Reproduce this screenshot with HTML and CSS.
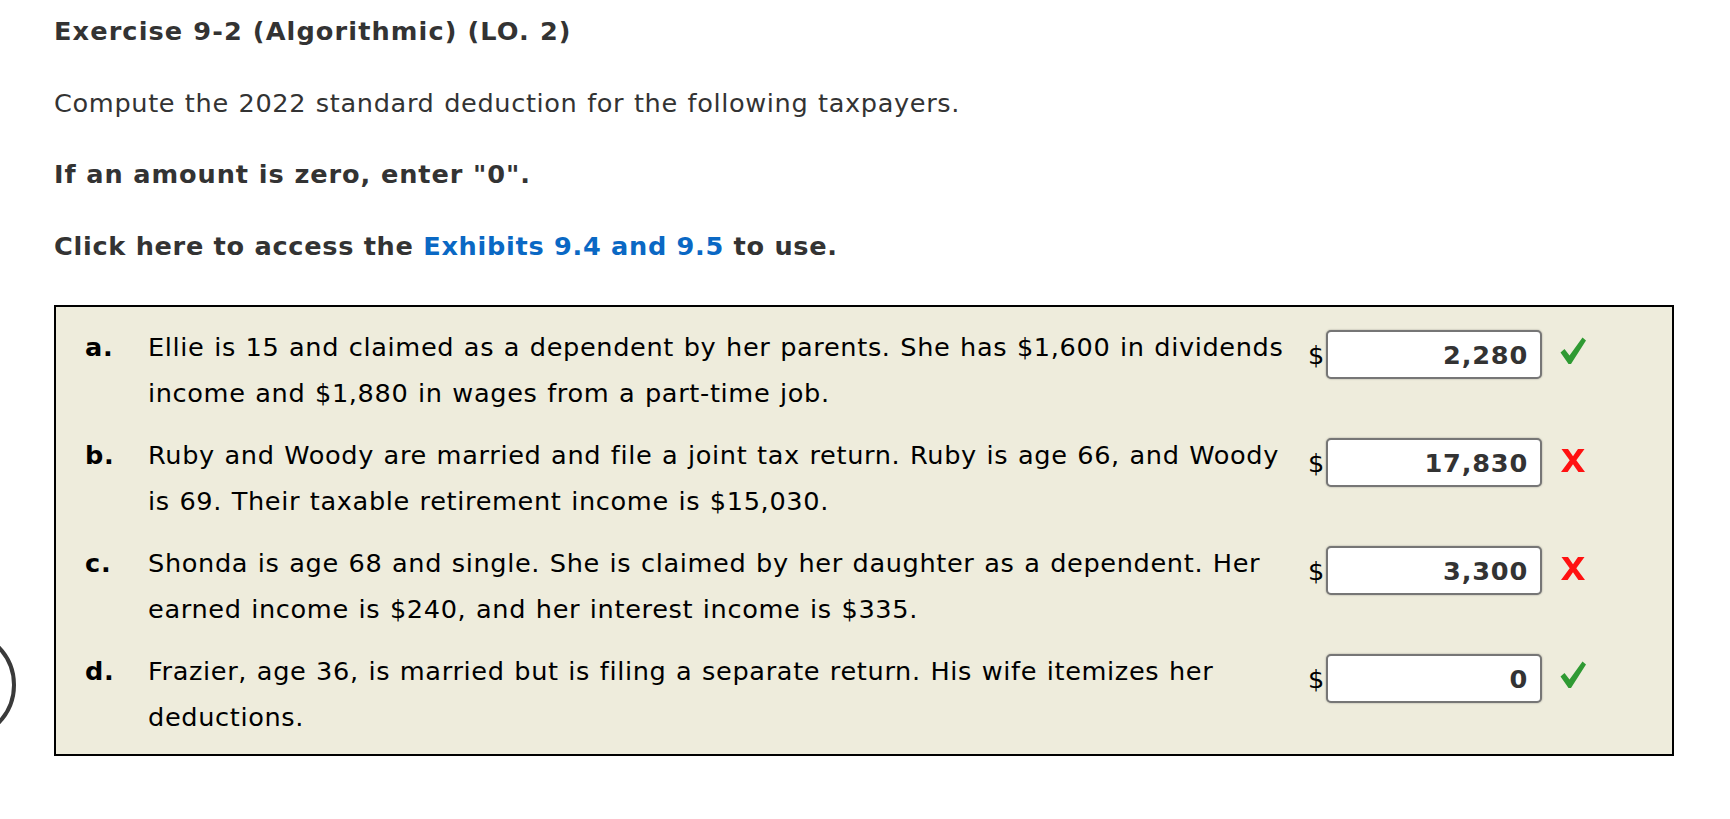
FILE: index.html
```html
<!DOCTYPE html>
<html lang="en">
<head>
<meta charset="utf-8">
<title>Exercise 9-2 (Algorithmic) (LO. 2)</title>
<link rel="stylesheet" href="styles.css">
</head>
<body>
<div class="ring" aria-hidden="true"></div>
<main class="page">
  <h1 class="title">Exercise 9-2 (Algorithmic) (LO. 2)</h1>
  <p class="intro">Compute the 2022 standard deduction for the following taxpayers.</p>
  <p class="strong">If an amount is zero, enter "0".</p>
  <p class="strong access">Click here to access the <a class="link" href="#">Exhibits 9.4 and 9.5</a> to use.</p>

  <section class="box">
    <div class="item">
      <div class="label">a.</div>
      <div class="text">Ellie is 15 and claimed as a dependent by her parents. She has $1,600 in dividends income and $1,880 in wages from a part-time job.</div>
      <div class="answer">
        <span class="dollar">$</span>
        <input class="field" type="text" value="2,280" readonly>
        <svg class="mark check" width="26" height="27" viewBox="0 0 26 27"><path d="M0.5 15.5 L4.5 12 L9.5 18.5 L22.5 0.5 L26 3.5 L11 27 L8.5 27 Z" fill="#2f9a33"/></svg>
      </div>
    </div>
    <div class="item">
      <div class="label">b.</div>
      <div class="text">Ruby and Woody are married and file a joint tax return. Ruby is age 66, and Woody is 69. Their taxable retirement income is $15,030.</div>
      <div class="answer">
        <span class="dollar">$</span>
        <input class="field" type="text" value="17,830" readonly>
        <svg class="mark cross" width="24" height="23" viewBox="0 0 24 23"><path d="M0.5 0 L7 0 L12 7.3 L17 0 L23.5 0 L15.3 11.3 L24 23 L17.4 23 L12 15.3 L6.6 23 L0 23 L8.7 11.3 Z" fill="#ff1111"/></svg>
      </div>
    </div>
    <div class="item">
      <div class="label">c.</div>
      <div class="text">Shonda is age 68 and single. She is claimed by her daughter as a dependent. Her earned income is $240, and her interest income is $335.</div>
      <div class="answer">
        <span class="dollar">$</span>
        <input class="field" type="text" value="3,300" readonly>
        <svg class="mark cross" width="24" height="23" viewBox="0 0 24 23"><path d="M0.5 0 L7 0 L12 7.3 L17 0 L23.5 0 L15.3 11.3 L24 23 L17.4 23 L12 15.3 L6.6 23 L0 23 L8.7 11.3 Z" fill="#ff1111"/></svg>
      </div>
    </div>
    <div class="item">
      <div class="label">d.</div>
      <div class="text">Frazier, age 36, is married but is filing a separate return. His wife itemizes her deductions.</div>
      <div class="answer">
        <span class="dollar">$</span>
        <input class="field" type="text" value="0" readonly>
        <svg class="mark check" width="26" height="27" viewBox="0 0 26 27"><path d="M0.5 15.5 L4.5 12 L9.5 18.5 L22.5 0.5 L26 3.5 L11 27 L8.5 27 Z" fill="#2f9a33"/></svg>
      </div>
    </div>
  </section>
</main>
</body>
</html>
```
FILE: styles.css
```css
html, body {
  margin: 0;
  padding: 0;
  background: #ffffff;
}

body {
  font-family: "DejaVu Sans", Verdana, sans-serif;
  font-size: 25.6px;
  line-height: 1.8;
  color: #333333;
  letter-spacing: 0.64px;
  word-spacing: 0.9px;
  overflow: hidden;
}

.ring {
  position: absolute;
  left: -96px;
  top: 629px;
  width: 104px;
  height: 104px;
  border: 4px solid #3a3a3a;
  border-radius: 50%;
}

.page {
  padding: 8px 0 0 54px;
}

.title {
  margin: 0;
  font-size: 25.6px;
  font-weight: bold;
  line-height: 1.8;
  color: #333333;
  letter-spacing: 1.1px;
  word-spacing: 0;
}

.intro,
.strong {
  margin: 25.6px 0 0 0;
}

.strong {
  font-weight: bold;
  letter-spacing: 0.9px;
  word-spacing: 0;
}

.strong.access {
  letter-spacing: 0.7px;
}

.link {
  color: #0a68c4;
  text-decoration: none;
}

.box {
  box-sizing: border-box;
  width: 1620px;
  margin-top: 36px;
  border: 2px solid #000000;
  background: #eeecdc;
  padding: 17px 0 13px 29px;
  color: #000000;
}

.item {
  display: flex;
  align-items: flex-start;
}

.item + .item {
  margin-top: 16px;
}

.label {
  width: 63px;
  flex: none;
  font-weight: bold;
  letter-spacing: 0.8px;
}

.text {
  width: 1150px;
  flex: none;
}

.answer {
  display: flex;
  align-items: baseline;
  margin: 6px 0 0 10px;
}

.dollar {
  width: 17px;
  color: #000000;
  letter-spacing: 0;
}

.field {
  box-sizing: border-box;
  width: 216px;
  height: 49px;
  margin: 0 0 0 1px;
  padding: 0 12px 0 8px;
  border: 2px solid #767676;
  border-radius: 5px;
  box-shadow: 0 0 2px rgba(0, 0, 0, 0.35);
  background: #ffffff;
  font-family: "DejaVu Sans", Verdana, sans-serif;
  font-size: 25.6px;
  font-weight: bold;
  letter-spacing: 0.8px;
  color: #333333;
  text-align: right;
  outline: none;
}

.mark {
  margin-left: 18px;
  margin-bottom: -3px;
  flex: none;
}

.cross {
  margin-left: 19px;
}
```
